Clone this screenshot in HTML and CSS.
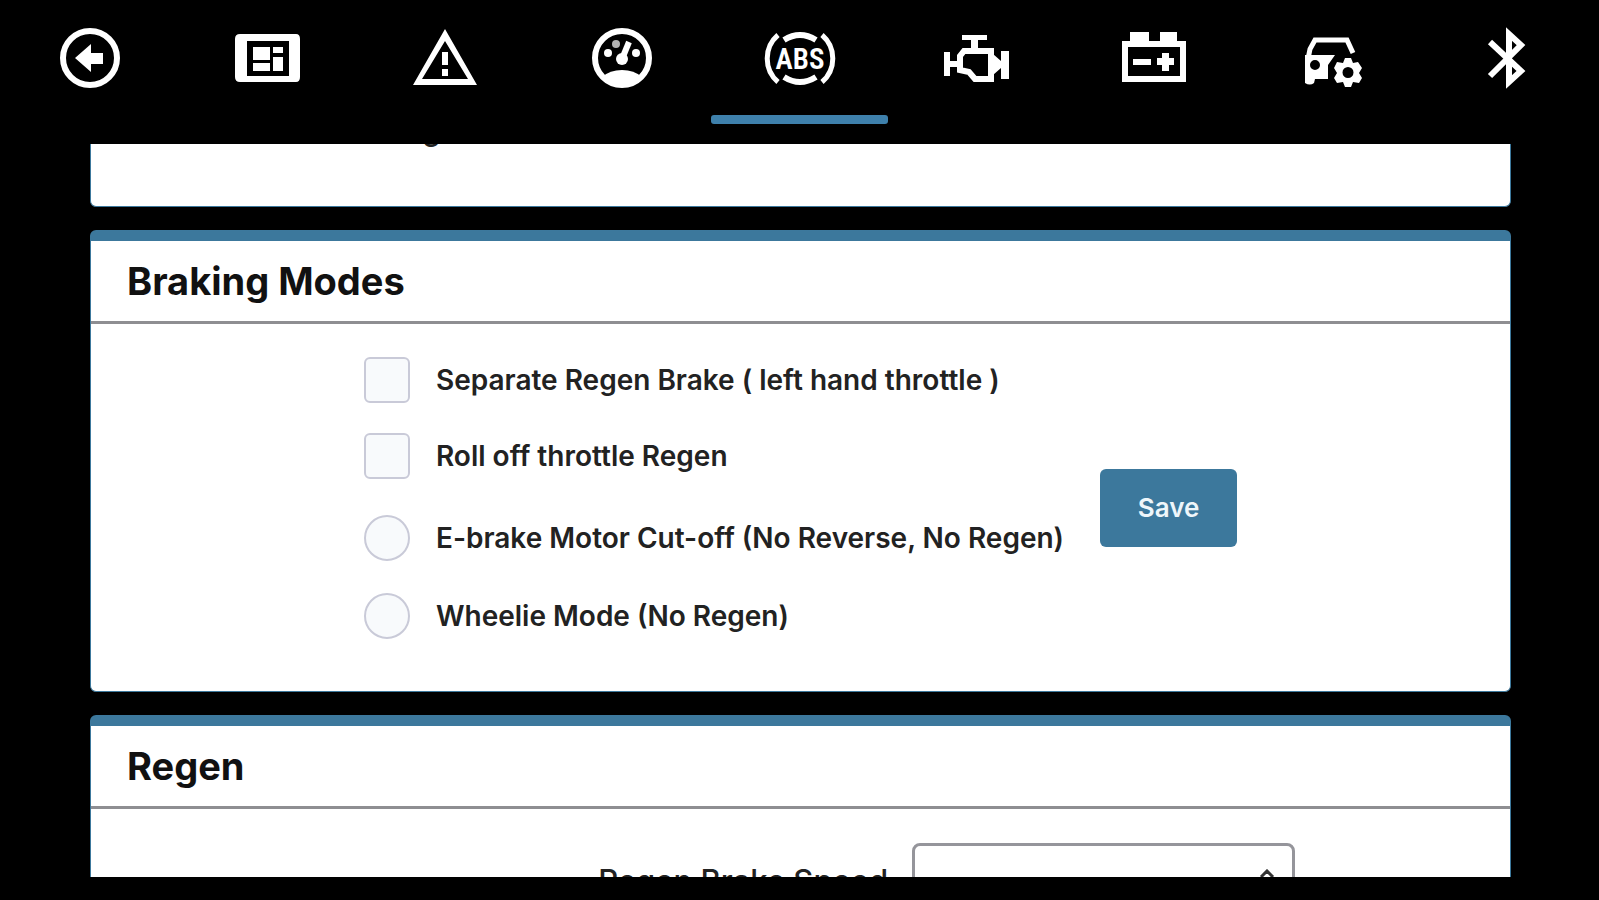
FILE: index.html
```html
<!DOCTYPE html>
<html lang="en">
<head>
    <meta charset="UTF-8">
    <meta name="viewport" content="width=device-width, initial-scale=1.0">
    <title>Braking</title>
    <link rel="stylesheet" href="styles.css">
</head>
<body>
    <nav class="tabs">
        <a href="#back" class="tab" aria-label="Back">
            <svg viewBox="0 0 72 72">
                <circle class="line" cx="37" cy="36" r="27"/>
                <path d="M22 36L38 22V31H50V42H38V50Z"/>
            </svg>
        </a>
        <a href="#display" class="tab" aria-label="Display">
            <svg viewBox="0 0 72 72">
                <path fill-rule="evenodd" d="M9 12H65Q69 12 69 17V55Q69 60 65 60H9Q4 60 4 55V17Q4 12 9 12ZM16 19V54H58V19Z"/>
                <path d="M22 25H39V38H22ZM22 41H39V49H22ZM42 25H52V31H42ZM42 35H52V49H42Z"/>
            </svg>
        </a>
        <a href="#warnings" class="tab" aria-label="Warnings">
            <svg viewBox="0 0 72 72">
                <path fill-rule="evenodd" d="M37 7L69 63H5ZM37 19L14 57H60Z"/>
                <path d="M34 30H40V43H34ZM34 47H40V54H34Z"/>
            </svg>
        </a>
        <a href="#gauges" class="tab" aria-label="Gauges">
            <svg viewBox="0 0 72 72">
                <circle class="line" cx="36" cy="36" r="27"/>
                <path d="M16 55Q24 48 36 48T56 55Q48 64 36 64T16 55Z"/>
                <circle cx="36" cy="37" r="6"/>
                <path class="line" d="M36 37L43 20"/>
                <circle cx="22" cy="31" r="4"/>
                <circle cx="30" cy="22" r="4" opacity="0.7"/>
                <circle cx="50" cy="31" r="4"/>
            </svg>
        </a>
        <a href="#braking" class="tab active" aria-label="Braking">
            <svg viewBox="0 0 72 72">
                <path class="line thin" d="M14 13A31 31 0 0 0 14 60M58 13A31 31 0 0 1 58 60"/>
                <path class="line" d="M20 18Q36 8 52 18M20 55Q36 65 52 55"/>
                <text x="36" y="47" text-anchor="middle">ABS</text>
            </svg>
        </a>
        <a href="#motor" class="tab" aria-label="Motor">
            <svg viewBox="0 0 72 72">
                <path d="M3 30H9V39H17V45H9V54H3ZM52 32L60 39V29H68V57H60V46L52 53Z"/>
                <path d="M21 13H46V18H37V27H30V18H21Z"/>
                <path class="line" d="M23 29H50V57H34L28 50L19 48V34Z"/>
            </svg>
        </a>
        <a href="#battery" class="tab" aria-label="Battery">
            <svg viewBox="0 0 72 72">
                <path d="M11 10H30V20H11ZM41 10H58V20H41Z"/>
                <rect class="line" x="6" y="22" width="58" height="35"/>
                <path d="M14 37H32V43H14ZM43 31H50V36H55V43H50V49H43V43H38V36H43Z"/>
            </svg>
        </a>
        <a href="#vehicle" class="tab" aria-label="Vehicle settings">
            <svg viewBox="0 0 72 72">
                <path class="line thin" d="M11 37L13 27L18 18H50L56 31"/>
                <path fill-rule="evenodd" d="M8 33H38L31 43V57H18L17 61Q13 64 8 61ZM18 38A5 5 0 1 0 18 48A5 5 0 1 0 18 38Z"/>
                <path fill-rule="evenodd" d="M48 36H54L56 41L61 40L65 46L62 51L65 56L62 61L56 60L54 65H48L46 60L40 61L37 56L40 51L37 46L40 40L46 41ZM51 45A5 5 0 1 0 51 56A5 5 0 1 0 51 45Z"/>
            </svg>
        </a>
        <a href="#bluetooth" class="tab" aria-label="Bluetooth">
            <svg viewBox="0 0 72 72">
                <path class="line" d="M16 20L47 49L35 60V12L47 23L16 54"/>
            </svg>
        </a>
    </nav>

    <main>
        <section class="card scrolled">
            <p>Braking</p>
        </section>

        <section class="card">
            <h2>Braking Modes</h2>
            <form class="modes">
                <div class="options">
                    <label><input type="checkbox" name="separate">Separate Regen Brake ( left hand throttle )</label>
                    <label><input type="checkbox" name="rolloff">Roll off throttle Regen</label>
                    <label class="first-radio"><input type="radio" name="mode" value="cutoff">E-brake Motor Cut-off (No Reverse, No Regen)</label>
                    <label><input type="radio" name="mode" value="wheelie">Wheelie Mode (No Regen)</label>
                </div>
                <button type="button">Save</button>
            </form>
        </section>

        <section class="card">
            <h2>Regen</h2>
            <form class="fields">
                <label for="regen-speed">Regen Brake Speed</label>
                <div class="select">
                    <select id="regen-speed">
                        <option></option>
                    </select>
                    <svg viewBox="0 0 16 22"><path d="M2 8L8 2L14 8M2 14L8 20L14 14"/></svg>
                </div>
            </form>
        </section>
    </main>
</body>
</html>
```

FILE: styles.css
```css
* {
    box-sizing: border-box;
}

body {
    margin: 0;
    height: 100vh;
    padding-bottom: 23px;
    display: flex;
    flex-direction: column;
    background: #000;
    color: #222;
    font-family: Inter, "Liberation Sans", sans-serif;
    font-size: 28px;
    font-weight: 600;
}

/* Top tabs */
.tabs {
    display: flex;
    flex: none;
    height: 124px;
    margin-bottom: 20px;
}

.tab {
    flex: 1;
    display: flex;
    flex-direction: column;
    justify-content: space-between;
    align-items: center;
    padding-top: 22px;
}

.tab.active::after {
    content: "";
    width: 100%;
    height: 9px;
    border-radius: 3px;
    background: #3e80ab;
}

.tab svg {
    width: 72px;
    height: 72px;
    fill: #fff;
}

.tab .line {
    fill: none;
    stroke: #fff;
    stroke-width: 6;
}

.tab .thin {
    stroke-width: 5;
}

.tab text {
    font-family: "Liberation Sans Narrow", "Roboto Condensed", Roboto, sans-serif;
    font-size: 29px;
    font-weight: 600;
}

/* Cards */
main {
    flex: 1;
    min-height: 0;
    overflow: hidden;
    padding: 0 88px 0 90px;
}

.card {
    margin-bottom: 23px;
    background: #fff;
    border: 1px solid #3c789c;
    border-top: 11px solid #3c789c;
    border-radius: 6px;
}

/* first card is mostly under the tabs */
.scrolled {
    margin-top: -60px;
    padding: 18px 0 57px 246px;
}

.scrolled p {
    margin: 0;
    line-height: 36px;
}

h2 {
    margin: 0;
    padding: 16px 36px;
    color: #111;
    font-size: 38px;
    line-height: 48px;
    font-weight: 700;
    border-bottom: 3px solid #8e8e92;
}

.modes {
    display: flex;
    justify-content: center;
    align-items: center;
    gap: 36px;
}

.options {
    display: flex;
    flex-direction: column;
    gap: 30px;
    padding: 33px 0 52px;
}

.options label {
    display: flex;
    align-items: center;
    gap: 26px;
    height: 46px;
}

.options .first-radio {
    margin: 6px 0 2px;
}

.options input {
    appearance: none;
    width: 46px;
    height: 46px;
    margin: 0;
    border: 2px solid #c9cad8;
    border-radius: 6px;
    background: #f8fafc;
}

.options input[type="radio"] {
    border-radius: 50%;
}

button {
    width: 137px;
    height: 78px;
    border: none;
    border-radius: 6px;
    background: #3c789c;
    color: #eef6fa;
    font: inherit;
    font-size: 26px;
}

.fields {
    display: grid;
    grid-template-columns: 4fr 3fr;
    gap: 24px;
    align-items: center;
    padding: 34px 0;
}

.fields label {
    text-align: right;
    font-size: 31px;
    font-weight: 500;
}

.select {
    position: relative;
    width: 64%;
}

.select select {
    appearance: none;
    display: block;
    width: 100%;
    height: 74px;
    border: 3px solid #95959b;
    border-radius: 8px;
    background: #fff;
    font: inherit;
}

.select svg {
    position: absolute;
    top: 26px;
    right: 20px;
    width: 16px;
    height: 22px;
    fill: none;
    stroke: #333;
    stroke-width: 3;
}
```
